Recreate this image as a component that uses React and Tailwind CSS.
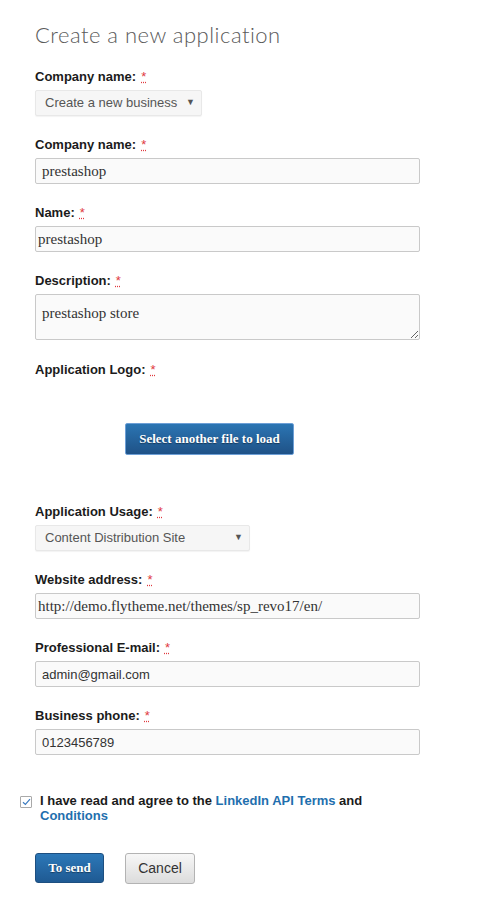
import React from "react";

const Req = () => (
  <abbr title="required" className="ml-[5px] font-normal text-[#e0393e] underline decoration-dotted">
    *
  </abbr>
);

const Label = ({ children }) => (
  <div className="mb-[5px] text-[13px] leading-[16px] font-bold text-[#1b1b1b]">
    {children}
    <Req />
  </div>
);

const FakeSelect = ({ value, width }) => (
  <div
    className={`flex h-[26px] items-center justify-between rounded-[2px] border border-[#e8e8e8] bg-[#f6f6f6] pl-[9px] pr-[6px] text-[13px] text-[#555] shadow-[0_1px_1px_rgba(0,0,0,0.05)] ${width}`}
  >
    <span>{value}</span>
    <span className="text-[9px] text-[#555]">▼</span>
  </div>
);

const TextInput = ({ value, serif, pad = "pl-[6px]" }) => (
  <input
    readOnly
    defaultValue={value}
    className={`block h-[26px] w-[385px] rounded-[2px] border border-[#c9c9c9] bg-[#fafafa] ${pad} text-[#333] outline-none ${
      serif ? "font-['Liberation_Serif',serif] text-[15px]" : "text-[13px]"
    }`}
  />
);

export default function App() {
  return (
    <div className="min-h-[910px] w-[490px] bg-white pl-[35px] font-['Liberation_Sans',Arial,sans-serif]">
      <h1 className="pt-[22px] font-['Lato',sans-serif] text-[22px] leading-[26px] font-light tracking-[0.5px] text-[#5a5a5a]">
        Create a new application
      </h1>

      <div className="mt-[21px]">
        <Label>Company name:</Label>
        <FakeSelect value="Create a new business" width="w-[167px]" />
      </div>

      <div className="mt-[21px]">
        <Label>Company name:</Label>
        <TextInput value="prestashop" serif />
      </div>

      <div className="mt-[21px]">
        <Label>Name:</Label>
        <TextInput value="prestashop" serif pad="pl-[2px]" />
      </div>

      <div className="mt-[21px]">
        <Label>Description:</Label>
        <textarea
          readOnly
          defaultValue="prestashop store"
          className="block h-[46px] w-[385px] rounded-[2px] border border-[#c9c9c9] bg-[#fafafa] px-[6px] pt-[9px] font-['Liberation_Serif',serif] text-[15px] leading-[18px] text-[#333] outline-none"
        />
      </div>

      <div className="mt-[22px]">
        <Label>Application Logo:</Label>
        <div className="pl-[90px] pt-[40px]">
          <button className="block h-[32px] w-[169px] rounded-[2px] border border-[#6d9fd6] bg-gradient-to-b from-[#2b75b3] to-[#1f5287] font-['Liberation_Serif',serif] text-[13px] font-bold text-white [text-shadow:0_1px_1px_rgba(0,0,0,0.4)]">
            Select another file to load
          </button>
        </div>
      </div>

      <div className="mt-[49px]">
        <Label>Application Usage:</Label>
        <FakeSelect value="Content Distribution Site" width="w-[215px]" />
      </div>

      <div className="mt-[21px]">
        <Label>Website address:</Label>
        <TextInput value="http://demo.flytheme.net/themes/sp_revo17/en/" serif pad="pl-[2px]" />
      </div>

      <div className="mt-[21px]">
        <Label>Professional E-mail:</Label>
        <TextInput value="admin@gmail.com" />
      </div>

      <div className="mt-[21px]">
        <Label>Business phone:</Label>
        <TextInput value="0123456789" />
      </div>

      <div className="-ml-[15px] mt-[38px] flex items-start gap-[8px]">
        <div className="mt-[3px] flex h-[12px] w-[12px] shrink-0 items-center justify-center rounded-[1px] border border-[#a9a9a9] bg-white">
          <svg width="9" height="8" viewBox="0 0 9 8" fill="none">
            <path d="M1 4.2 L3.4 6.4 L8 1.2" stroke="#3b7bc0" strokeWidth="1.2" />
          </svg>
        </div>
        <p className="w-[380px] text-[13px] leading-[15px] font-bold text-[#1b1b1b]">
          I have read and agree to the{" "}
          <a className="text-[#1f6fae]">LinkedIn API Terms</a> and{" "}
          <a className="text-[#1f6fae]">Conditions</a>
        </p>
      </div>

      <div className="mt-[30px] flex gap-[21px]">
        <button className="h-[30px] w-[69px] rounded-[3px] border border-[#1d4f80] bg-gradient-to-b from-[#2c78b8] to-[#1f5a93] font-['Liberation_Serif',serif] text-[13px] font-bold text-white [text-shadow:0_1px_1px_rgba(0,0,0,0.4)]">
          To send
        </button>
        <button className="h-[31px] w-[70px] rounded-[3px] border border-[#b3b3b3] bg-gradient-to-b from-[#f7f7f7] to-[#dcdcdc] text-[14px] text-[#333]">
          Cancel
        </button>
      </div>
    </div>
  );
}
